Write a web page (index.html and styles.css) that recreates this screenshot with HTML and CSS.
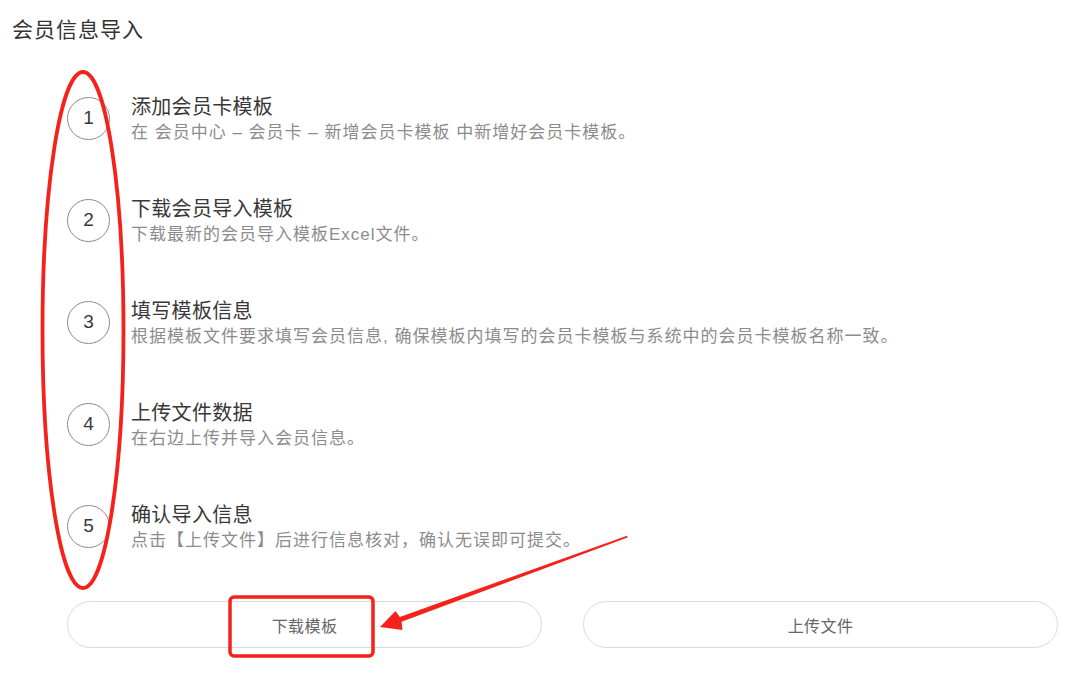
FILE: index.html
```html
<!DOCTYPE html>
<html lang="zh-CN">
<head>
    <meta charset="UTF-8">
    <meta name="viewport" content="width=device-width, initial-scale=1.0">
    <title>会员信息导入</title>
    <link rel="stylesheet" href="styles.css">
</head>
<body>

<div class="import-page">
    <h1 class="page-title">会员信息导入</h1>

    <ol class="steps">
        <li class="step">
            <span class="step-num">1</span>
            <div class="step-body">
                <p class="step-title">添加会员卡模板</p>
                <p class="step-desc">在 会员中心 – 会员卡 – 新增会员卡模板 中新增好会员卡模板。</p>
            </div>
        </li>
        <li class="step">
            <span class="step-num">2</span>
            <div class="step-body">
                <p class="step-title">下载会员导入模板</p>
                <p class="step-desc">下载最新的会员导入模板Excel文件。</p>
            </div>
        </li>
        <li class="step">
            <span class="step-num">3</span>
            <div class="step-body">
                <p class="step-title">填写模板信息</p>
                <p class="step-desc">根据模板文件要求填写会员信息, 确保模板内填写的会员卡模板与系统中的会员卡模板名称一致。</p>
            </div>
        </li>
        <li class="step">
            <span class="step-num">4</span>
            <div class="step-body">
                <p class="step-title">上传文件数据</p>
                <p class="step-desc">在右边上传并导入会员信息。</p>
            </div>
        </li>
        <li class="step">
            <span class="step-num">5</span>
            <div class="step-body">
                <p class="step-title">确认导入信息</p>
                <p class="step-desc">点击【上传文件】后进行信息核对，确认无误即可提交。</p>
            </div>
        </li>
    </ol>

    <div class="actions">
        <button class="action-btn" type="button">下载模板</button>
        <button class="action-btn" type="button">上传文件</button>
    </div>
</div>

<!-- red hand-drawn marks on top of the screenshot -->
<svg class="marks" width="1083" height="689" viewBox="0 0 1083 689">
    <ellipse cx="83" cy="330" rx="40.5" ry="258" fill="none" stroke="#f5221b" stroke-width="3.8"/>
    <rect x="230" y="597" width="143" height="59" rx="4" fill="none" stroke="#f5221b" stroke-width="3.5"/>
    <polygon points="627,535.8 399.8,617 395.5,611 380,627 402.5,630 401.6,621.7 627.6,537.6" fill="#f5221b"/>
</svg>

</body>
</html>
```

FILE: styles.css
```css
body {
    margin: 0;
    padding: 0;
    background-color: #fff;
    font-family: "Liberation Sans", "Noto Sans CJK SC", sans-serif;
    color: #333;
}
.import-page {
    width: 1083px;
    height: 689px;
}
.page-title {
    margin: 0;
    padding: 18px 12px 0;
    font-size: 21px;
    font-weight: normal;
    letter-spacing: 1px;
    line-height: 24px;
    color: #333;
}
.steps {
    list-style: none;
    margin: 25px 0 0;
    padding: 0 0 0 67px;
}
.step {
    display: flex;
    align-items: center;
    gap: 21px;
    height: 102px;
}
.step-num {
    display: flex;
    align-items: center;
    justify-content: center;
    flex: none;
    width: 41px;
    height: 41px;
    border: 1px solid #8a8a8a;
    border-radius: 50%;
    font-size: 19px;
    color: #3a3a3a;
}
.step-body {
    padding-top: 3px;
}
.step-title {
    margin: 0;
    font-size: 20px;
    letter-spacing: 0.3px;
    line-height: 24px;
    color: #383838;
}
.step-desc {
    margin: 3px 0 0;
    font-size: 17px;
    letter-spacing: 1px;
    line-height: 22px;
    color: #8c8c8c;
}
.actions {
    display: flex;
    gap: 41px;
    margin-top: 24px;
    padding: 0 25px 0 67px;
}
.action-btn {
    flex: 1;
    height: 47px;
    border: 1px solid #dadada;
    border-radius: 24px;
    background-color: #fff;
    font-family: "Liberation Sans", "Noto Sans CJK SC", sans-serif;
    font-size: 16px;
    letter-spacing: 0.4px;
    color: #666;
    cursor: pointer;
}
.marks {
    position: absolute;
    top: 0;
    left: 0;
    pointer-events: none;
}
```
